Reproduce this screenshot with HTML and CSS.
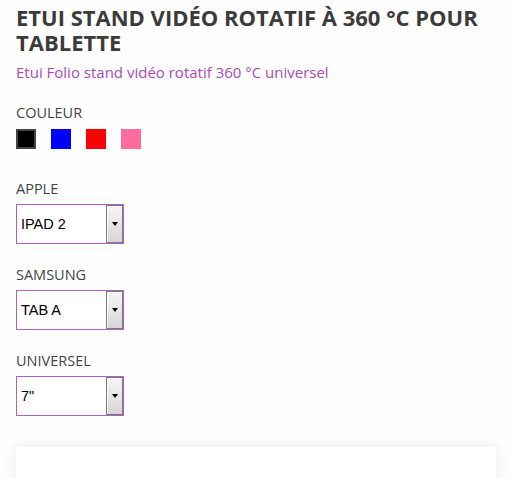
FILE: index.html
```html
<!DOCTYPE html>
<html lang="fr">
<head>
<meta charset="utf-8">
<title>Etui stand vidéo rotatif</title>
<link rel="stylesheet" href="styles.css">
</head>
<body>
<main class="product">
  <h1 class="title">Etui stand vidéo rotatif à 360 °C pour tablette</h1>
  <p class="subtitle">Etui Folio stand vidéo rotatif 360 °C universel</p>

  <section class="option option-color">
    <div class="label">Couleur</div>
    <div class="swatches">
      <span class="swatch swatch-black selected"></span>
      <span class="swatch swatch-blue"></span>
      <span class="swatch swatch-red"></span>
      <span class="swatch swatch-pink"></span>
    </div>
  </section>

  <section class="option">
    <div class="label">Apple</div>
    <div class="select"><span class="select-value">IPAD 2</span><span class="select-btn"><span class="arrow"></span></span></div>
  </section>

  <section class="option">
    <div class="label">Samsung</div>
    <div class="select"><span class="select-value">TAB A</span><span class="select-btn"><span class="arrow"></span></span></div>
  </section>

  <section class="option">
    <div class="label">Universel</div>
    <div class="select"><span class="select-value">7"</span><span class="select-btn"><span class="arrow"></span></span></div>
  </section>

  <div class="card"></div>
</main>
</body>
</html>
```

FILE: styles.css
```css
html, body {
  margin: 0;
  padding: 0;
  background: #fefefe;
}
body {
  font-family: "Open Sans", "Liberation Sans", sans-serif;
  color: #444;
}
.product {
  padding: 5px 18px 0 16px;
  display: flex;
  flex-direction: column;
}
.title {
  margin: 0;
  font-size: 22px;
  line-height: 25px;
  font-weight: 700;
  text-transform: uppercase;
  color: #3b3b3b;
}
.subtitle {
  margin: 7px 0 0;
  font-size: 15px;
  line-height: 20px;
  color: #a64cb4;
}
.option {
  margin-top: 21px;
  display: flex;
  flex-direction: column;
  align-items: flex-start;
}
.option-color {
  margin-top: 21px;
}
.option-color + .option {
  margin-top: 30px;
}
.label {
  font-size: 14.5px;
  line-height: 20px;
  text-transform: uppercase;
  color: #444;
}
.swatches {
  display: flex;
  gap: 15px;
  margin-top: 6px;
}
.swatch {
  width: 20px;
  height: 20px;
  box-sizing: border-box;
}
.swatch-black { background: #000; }
.swatch-black.selected { border: 2px solid #444; }
.swatch-blue { background: #0000ff; }
.swatch-red { background: #ff0000; }
.swatch-pink { background: #ff6b9d; border: 1px solid #f2709f; }

.select {
  margin-top: 5px;
  width: 108px;
  height: 40px;
  box-sizing: border-box;
  border: 1px solid #b35ec8;
  background: #fff;
  display: flex;
  align-items: stretch;
}
.select-value {
  flex: 1;
  padding-left: 4px;
  display: flex;
  align-items: center;
  font-family: "Liberation Sans", Arial, sans-serif;
  font-size: 14.5px;
  color: #000;
}
.select-btn {
  width: 17px;
  box-sizing: border-box;
  border: 1px solid #7a7a7a;
  box-shadow: inset 1px 1px 0 #fff;
  background: linear-gradient(#f6f6f6, #e6e6e6 50%, #d6d6d6);
  display: flex;
  align-items: center;
  justify-content: center;
}
.arrow {
  width: 0;
  height: 0;
  border-left: 3.5px solid transparent;
  border-right: 3.5px solid transparent;
  border-top: 4px solid #000;
}
.card {
  margin-top: 31px;
  height: 60px;
  background: #fff;
  box-shadow: 0 0 14px rgba(0, 0, 0, 0.09);
}
```
